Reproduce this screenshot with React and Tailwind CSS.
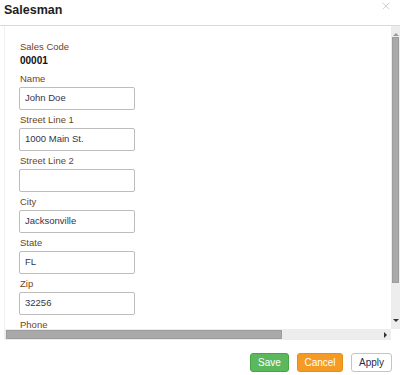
import { X } from "lucide-react";

const fields = [
  { label: "Name", value: "John Doe" },
  { label: "Street Line 1", value: "1000 Main St." },
  { label: "Street Line 2", value: "" },
  { label: "City", value: "Jacksonville" },
  { label: "State", value: "FL" },
  { label: "Zip", value: "32256" },
];

function Field({ label, value }) {
  return (
    <div className="flex flex-col mb-[1px]">
      <div className="h-[17px] leading-[17px] pl-[15px] text-[9.5px] text-[#6e4420]">{label}</div>
      <div className="ml-[14px] w-[116px] h-[23px] border border-[#bdbdbd] rounded-[2px] bg-white px-[5px] flex items-center text-[9.5px] text-[#34344a]">
        {value}
      </div>
    </div>
  );
}

function App() {
  return (
    <div className="w-[400px] h-[375px] bg-white flex flex-col overflow-hidden" style={{ fontFamily: '"Liberation Sans", Arial, sans-serif' }}>
      {/* header */}
      <div className="h-[26px] shrink-0 flex items-start justify-between border-b border-[#d4dae6]">
        <div className="pl-[4px] pt-[1px] text-[12.5px] font-bold text-[#1e1e1e]">Salesman</div>
        <X className="mr-[8px] mt-0 text-[#c0c0c0]" size={12} strokeWidth={1.5} />
      </div>

      {/* scroll area */}
      <div className="flex flex-col ml-[4px] h-[314px] border-l border-[#f0f0f0]">
        <div className="flex flex-1 min-h-0">
          <div className="flex-1 pt-[14px] overflow-hidden">
            <div className="h-[14px] leading-[14px] pl-[15px] text-[9.5px] text-[#6e4420]">Sales Code</div>
            <div className="h-[16px] leading-[14px] pl-[15px] text-[10px] font-bold text-[#111]">00001</div>
            {fields.map((f) => (
              <Field key={f.label} label={f.label} value={f.value} />
            ))}
            <div className="h-[17px] leading-[17px] pl-[15px] text-[9.5px] text-[#6e4420]">Phone</div>
          </div>
          {/* vertical scrollbar */}
          <div className="w-[9px] bg-[#ededed] flex flex-col items-center">
            <div className="h-[11px] flex items-end justify-center pb-[1px]">
              <div className="w-0 h-0 border-l-[3px] border-r-[3px] border-b-[3px] border-l-transparent border-r-transparent border-b-[#9a9a9a]" />
            </div>
            <div className="w-[7px] h-[246px] bg-[#a9a9a9] border border-[#9c9c9c]" />
            <div className="flex-1" />
            <div className="h-[10px] flex items-start justify-center">
              <div className="w-0 h-0 border-l-[3px] border-r-[3px] border-t-[3px] border-l-transparent border-r-transparent border-t-[#333]" />
            </div>
          </div>
        </div>
        {/* horizontal scrollbar */}
        <div className="h-[11px] flex shrink-0">
          <div className="flex-1 bg-[#ededed] flex items-center pl-[1px]">
            <div className="w-[276px] h-[9px] bg-[#a9a9a9] border border-[#9c9c9c]" />
            <div className="flex-1" />
            <div className="mr-[4px] w-0 h-0 border-t-[3px] border-b-[3px] border-l-[3px] border-t-transparent border-b-transparent border-l-[#333]" />
          </div>
          <div className="w-[9px] bg-white" />
        </div>
      </div>

      {/* footer */}
      <div className="flex-1 flex items-start justify-end gap-[8px] pt-[13px] pr-[8px]">
        <button className="w-[39px] h-[19px] rounded-[3px] bg-[#5cb85c] border border-[#47a447] text-white text-[10px] leading-none">Save</button>
        <button className="w-[46px] h-[19px] rounded-[3px] bg-[#f59b25] border border-[#e88e14] text-white text-[10px] leading-none">Cancel</button>
        <button className="w-[41px] h-[19px] rounded-[3px] bg-white border border-[#c4c4c4] text-[#2a2a4a] text-[10px] leading-none">Apply</button>
      </div>
    </div>
  );
}

export default App;
